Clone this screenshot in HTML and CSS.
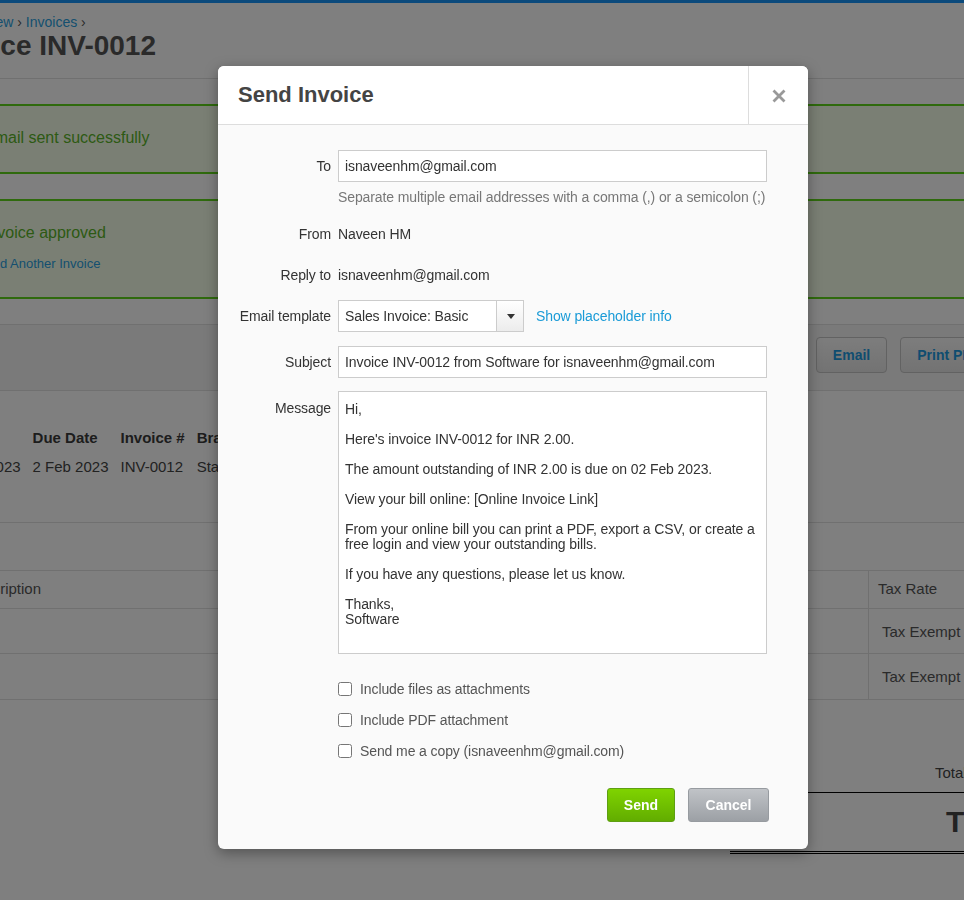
FILE: index.html
```html
<!DOCTYPE html>
<html lang="en">
<head>
<meta charset="utf-8">
<title>Send Invoice</title>
<link rel="stylesheet" href="styles.css">
</head>
<body>
<div class="topbar"></div>
<div class="page">
  <div class="crumbs"><a>Overview</a> <span class="sep">›</span> <a>Invoices</a> <span class="sep">›</span></div>
  <h1 class="title">Invoice INV-0012</h1>

  <div class="alert first">Email sent successfully</div>
  <div class="alert second">
    <p class="alert-msg">Invoice approved</p>
    <a class="alert-link">Add Another Invoice</a>
  </div>

  <div class="toolbar">
    <button class="tbtn">Email</button>
    <button class="tbtn">Print PDF</button>
  </div>

  <div class="details">
    <div class="dcol"><div class="dh">Date</div><div class="dv">27 Jan 2023</div></div>
    <div class="dcol"><div class="dh">Due Date</div><div class="dv">2 Feb 2023</div></div>
    <div class="dcol"><div class="dh">Invoice #</div><div class="dv">INV-0012</div></div>
    <div class="dcol"><div class="dh">Branding</div><div class="dv">Standard</div></div>
  </div>

  <div class="tabs"></div>

  <div class="items">
    <div class="irow ihead"><div class="c1">Description</div><div class="c2">Tax Rate</div></div>
    <div class="irow r1"><div class="c1"></div><div class="c2 ex">Tax Exempt</div></div>
    <div class="irow r2"><div class="c1"></div><div class="c2 ex">Tax Exempt</div></div>
  </div>

  <div class="totals">
    <div class="sub">Total</div>
    <div class="grand">Total 2.00</div>
  </div>
</div>

<div class="overlay"></div>

<div class="modal">
  <div class="mhead">
    <h2 class="mtitle">Send Invoice</h2>
    <div class="mclose">
      <svg width="14" height="14" viewBox="0 0 14 14"><path d="M1.5 1.5 L12.5 12.5 M12.5 1.5 L1.5 12.5" stroke="#999" stroke-width="2.8" stroke-linecap="butt"/></svg>
    </div>
  </div>
  <div class="mbody">
    <div class="frow">
      <div class="lbl">To</div>
      <div class="inp">isnaveenhm@gmail.com</div>
    </div>
    <div class="help">Separate multiple email addresses with a comma (,) or a semicolon (;)</div>
    <div class="frow from">
      <div class="lbl">From</div>
      <div class="val">Naveen HM</div>
    </div>
    <div class="frow reply">
      <div class="lbl">Reply to</div>
      <div class="val">isnaveenhm@gmail.com</div>
    </div>
    <div class="frow tmpl">
      <div class="lbl">Email template</div>
      <div class="tmpl-field">
        <div class="select"><span class="sel-text">Sales Invoice: Basic</span><span class="sel-arrow"><span class="tri"></span></span></div>
        <a class="plink">Show placeholder info</a>
      </div>
    </div>
    <div class="frow subj">
      <div class="lbl">Subject</div>
      <div class="inp">Invoice INV-0012 from Software for isnaveenhm@gmail.com</div>
    </div>
    <div class="frow msg">
      <div class="lbl">Message</div>
      <div class="textarea">Hi,

Here's invoice INV-0012 for INR 2.00.

The amount outstanding of INR 2.00 is due on 02 Feb 2023.

View your bill online: [Online Invoice Link]

From your online bill you can print a PDF, export a CSV, or create a
free login and view your outstanding bills.

If you have any questions, please let us know.

Thanks,
Software</div>
    </div>
    <div class="checks">
      <label class="chk"><input type="checkbox"><span>Include files as attachments</span></label>
      <label class="chk"><input type="checkbox"><span>Include PDF attachment</span></label>
      <label class="chk"><input type="checkbox"><span>Send me a copy (isnaveenhm@gmail.com)</span></label>
    </div>
    <div class="actions">
      <button class="btn send">Send</button>
      <button class="btn cancel">Cancel</button>
    </div>
  </div>
</div>
</body>
</html>
```

FILE: styles.css
```css
* { box-sizing: border-box; }
html, body { margin: 0; padding: 0; }
body {
  font-family: "Liberation Sans", Arial, sans-serif;
  background: #fff;
  color: #444;
  width: 964px;
  height: 900px;
  overflow: hidden;
  position: relative;
}

.topbar { height: 3px; background: #1694f8; }

.page { margin-left: -67px; width: 1077px; }

.crumbs {
  padding: 11px 0 0 22px;
  font-size: 14px;
  line-height: 16px;
  color: #2a9fe0;
  white-space: nowrap;
}
.crumbs .sep { color: #555; }

.title {
  margin: -1px 0 0;
  padding: 0 0 15px 2px;
  font-size: 28px;
  line-height: 34px;
  font-weight: bold;
  color: #555;
  border-bottom: 1px solid #e0e0e0;
}

.alert {
  margin-top: 25px;
  border-top: 2px solid #5ed41a;
  border-bottom: 2px solid #5ed41a;
  background: #f5ffe8;
  padding: 22px 0 24px 51px;
  color: #5ab428;
  font-size: 16px;
  line-height: 20px;
}
.alert.second { padding-bottom: 25px; }
.alert-msg { margin: 0; }
.alert-link {
  display: block;
  margin: 13px 0 0 0;
  font-size: 13px;
  line-height: 16px;
  color: #2a9fe0;
}

.toolbar {
  margin-top: 25px;
  border-top: 1px solid #e0e0e0;
  border-bottom: 1px solid #e0e0e0;
  background: #f4f4f4;
  padding: 12px 12px 17px;
  display: flex;
  justify-content: flex-end;
  gap: 13px;
}
.tbtn {
  height: 36px;
  padding: 0 16px;
  border: 1px solid #c4c4c4;
  border-radius: 4px;
  background: linear-gradient(#fafafa, #e6e6e6);
  color: #1e9ae0;
  font: bold 14px "Liberation Sans", Arial, sans-serif;
}

.details {
  display: flex;
  gap: 12px;
  padding: 38px 0 0 5px;
  font-size: 15px;
  line-height: 18px;
  color: #444;
  white-space: nowrap;
}
.dh { font-weight: bold; color: #3a3a3a; }
.dv { margin-top: 11px; }

.tabs {
  margin-top: 46px;
  border-top: 1px solid #e0e0e0;
  height: 48px;
}

.items { border-top: 1px solid #e0e0e0; font-size: 15px; color: #555; }
.irow {
  display: grid;
  grid-template-columns: 935px 1fr;
  border-bottom: 1px solid #e0e0e0;
}
.ihead { height: 38px; }
.r1 { height: 45px; }
.r2 { height: 46px; }
.irow > div { display: flex; align-items: center; }
.ihead > div { padding-bottom: 2px; }
.c1 { padding-left: 33px; }
.c2 { padding-left: 9px; border-left: 1px solid #e0e0e0; white-space: nowrap; }
.c2.ex { padding-left: 13px; }

.totals { margin: 64px 0 0 797px; color: #444; white-space: nowrap; }
.sub {
  font-size: 15px;
  line-height: 18px;
  padding: 0 0 10px 205px;
}
.grand {
  border-top: 1px solid #000;
  border-bottom: 3px double #000;
  padding: 13px 0 13px 216px;
  font-size: 30px;
  line-height: 32px;
  font-weight: bold;
  font-kerning: none;
  letter-spacing: 1px;
}

.overlay {
  position: fixed;
  inset: 0;
  background: rgba(0, 0, 0, 0.5);
}

.modal {
  position: absolute;
  left: 218px;
  top: 66px;
  width: 590px;
  background: #fafafa;
  border-radius: 6px;
  box-shadow: 0 4px 14px rgba(0, 0, 0, 0.35);
  overflow: hidden;
  color: #333;
  font-size: 14px;
}
.mhead {
  display: flex;
  height: 59px;
  background: #fff;
  border-bottom: 1px solid #ddd;
}
.mtitle {
  flex: 1;
  margin: 0;
  padding-left: 20px;
  font-size: 22px;
  line-height: 58px;
  font-weight: bold;
  color: #444;
}
.mclose {
  width: 60px;
  border-left: 1px solid #ddd;
  display: flex;
  align-items: center;
  justify-content: center;
  padding-top: 1px;
}

.mbody { padding: 25px 0 27px; letter-spacing: -0.1px; }

.frow {
  display: grid;
  grid-template-columns: 113px 429px;
  column-gap: 7px;
  align-items: center;
  min-height: 32px;
}
.lbl { text-align: right; line-height: 16px; white-space: nowrap; }
.val { line-height: 16px; }
.inp {
  height: 32px;
  border: 1px solid #ccc;
  background: #fff;
  padding: 0 6px;
  line-height: 30px;
  white-space: nowrap;
}
.help {
  margin: 7px 0 0 120px;
  line-height: 16px;
  color: #777;
  white-space: nowrap;
}
.from { margin-top: 13px; }
.reply { margin-top: 9px; }
.tmpl { margin-top: 9px; }
.subj { margin-top: 14px; }
.msg { margin-top: 13px; align-items: start; }
.msg .lbl { padding-top: 9px; }

.tmpl-field { display: flex; align-items: center; }
.select {
  display: flex;
  width: 186px;
  height: 32px;
  border: 1px solid #ccc;
  background: #fff;
}
.sel-text { flex: 1; padding-left: 6px; line-height: 30px; white-space: nowrap; }
.sel-arrow {
  width: 27px;
  border-left: 1px solid #ccc;
  background: linear-gradient(#fff, #ececec);
  display: flex;
  align-items: center;
  justify-content: center;
  padding-left: 1px;
}
.tri {
  width: 0;
  height: 0;
  border-left: 4.5px solid transparent;
  border-right: 4.5px solid transparent;
  border-top: 5px solid #333;
}
.plink { margin-left: 12px; color: #1a9bd7; white-space: nowrap; }

.textarea {
  height: 263px;
  border: 1px solid #ccc;
  background: #fff;
  padding: 10px 6px 0;
  line-height: 15px;
  white-space: pre;
  color: #333;
}

.checks {
  margin: 27px 0 0 120px;
  display: flex;
  flex-direction: column;
  gap: 15px;
}
.chk {
  display: flex;
  align-items: center;
  gap: 8px;
  line-height: 16px;
  color: #555;
  height: 16px;
}
.chk input { margin: 0; width: 14px; height: 14px; }

.actions {
  margin-top: 29px;
  display: flex;
  justify-content: flex-end;
  gap: 13px;
  padding-right: 39px;
}
.btn {
  height: 34px;
  padding: 0 16px;
  border-radius: 3px;
  font: bold 14px "Liberation Sans", Arial, sans-serif;
  letter-spacing: 0;
  color: #fff;
}
.send {
  border: 1px solid #5e9f12;
  background: linear-gradient(#7fd300, #62ad00);
}
.cancel {
  padding: 0 16.5px;
  border: 1px solid #979ba0;
  background: linear-gradient(#c0c3c7, #9ca0a5);
}
```
